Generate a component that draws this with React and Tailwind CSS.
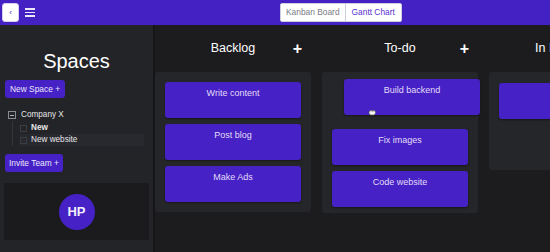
import React from 'react';

const columns = [
    { title: 'Backlog', cards: ['Write content', 'Post blog', 'Make Ads'] },
    { title: 'To-do', cards: ['Fix images', 'Code website'], dragging: true },
    { title: 'In Progress', cards: ['Create'] },
];

function Card({ text }) {
    return (
        <div className="h-[36px] rounded-[3px] bg-[#4521c6] pt-[5px] text-center text-[9px] text-[#e4dcf8] shadow-[0_1px_2px_rgba(0,0,0,0.4)] whitespace-nowrap overflow-hidden">
            {text}
        </div>
    );
}

export default function App() {
    return (
        <div className="w-[550px] h-[252px] overflow-hidden bg-[#1c1c1e] flex flex-col" style={{ fontFamily: '"Liberation Sans", Arial, sans-serif' }}>
            {/* top bar */}
            <div className="h-[25px] shrink-0 bg-[#4321c2] flex items-center px-[2px] relative">
                <button type="button" className="w-[17px] h-[19px] rounded-[3px] bg-white border border-[#d6d0ee] text-[#4321c2] text-[8px] leading-none flex items-center justify-center">
                    ‹
                </button>
                <div className="ml-[6px] flex flex-col gap-[2px]">
                    <span className="block w-[10px] h-[1.5px] bg-[#ebe7fb]" />
                    <span className="block w-[10px] h-[1.5px] bg-[#ebe7fb]" />
                    <span className="block w-[10px] h-[1.5px] bg-[#ebe7fb]" />
                </div>
                <div className="ml-[245px] flex h-[19px] rounded-[2px] bg-white border border-[#cfcde0] text-[8.4px]">
                    <div className="px-[5px] flex items-center text-[#7b7b85] border-r border-[#cfcde0]">Kanban Board</div>
                    <div className="px-[6px] flex items-center text-[#5a2fd0]">Gantt Chart</div>
                </div>
            </div>

            <div className="flex flex-1 min-h-0">
                {/* sidebar */}
                <div className="w-[153px] shrink-0 bg-[#232427] flex flex-col px-[4px]">
                    <div className="text-center text-white text-[20px] mt-[24px] leading-[24px]">Spaces</div>
                    <button type="button" className="mt-[7px] ml-[1px] self-start h-[18px] px-[5px] rounded-[3px] bg-[#4521c6] text-[8.4px] text-[#ece8fb]">
                        New Space +
                    </button>
                    <div className="mt-[11px] ml-[4px] text-[8.2px] text-[#e6e6e8]">
                        <div className="flex items-center gap-[5px] h-[12px]">
                            <span className="w-[8px] h-[8px] border border-[#8a8a90] flex items-center justify-center">
                                <span className="block w-[4px] h-px bg-[#b0b0b4]" />
                            </span>
                            Company X
                        </div>
                        <div className="ml-[4px] border-l border-[#34353a] pl-[7px] flex flex-col pt-px">
                            <div className="flex items-center gap-[4px] h-[12px] font-bold">
                                <span className="w-[7px] h-[7px] border border-[#3c3d42]" />
                                New
                            </div>
                            <div className="flex items-center gap-[4px] h-[12px] bg-[#28282f] mr-[5px]">
                                <span className="w-[7px] h-[7px] border border-[#3c3d42]" />
                                New website
                            </div>
                        </div>
                    </div>
                    <button type="button" className="mt-[8px] ml-[1px] self-start h-[18px] px-[4px] rounded-[3px] bg-[#4521c6] text-[8.4px] text-[#ece8fb]">
                        Invite Team +
                    </button>
                    <div className="mt-[11px] h-[57px] bg-[#1b1b1d] flex items-center justify-center">
                        <div className="w-[36px] h-[36px] rounded-full bg-[#4521c6] flex items-center justify-center text-[13px] font-bold text-[#f1eefc]">
                            HP
                        </div>
                    </div>
                </div>
                <div className="w-[2px] shrink-0 bg-[#161618]" />

                {/* board */}
                <div className="flex-1 flex gap-[11px] relative overflow-hidden">
                    {columns.map((col) => (
                        <div key={col.title} className="w-[156px] shrink-0 flex flex-col">
                            <div className="h-[47px] grid grid-cols-[1fr_auto_1fr] items-center text-white">
                                <div />
                                <div className="text-[12.5px] whitespace-nowrap">{col.title}</div>
                                <div className="justify-self-end pr-[9px] text-[16px] font-bold leading-none">+</div>
                            </div>
                            <div className={`rounded-[3px] bg-[#252629] px-[10px] flex flex-col gap-[6px] ${col.dragging ? 'pt-[10px] pb-[6px]' : col.title === 'In Progress' ? 'pt-[11px] h-[98px]' : 'pt-[10px] pb-[10px]'}`}>
                                {col.dragging && <div className="h-[41px]" />}
                                {col.cards.map((c) => <Card key={c} text={c} />)}
                            </div>
                        </div>
                    ))}
                    {/* card being dragged */}
                    <div className="absolute left-[189px] top-[54px] w-[136px]">
                        <Card text="Build backend" />
                    </div>
                    {/* grab cursor */}
                    <svg className="absolute left-[213px] top-[84px]" width="8" height="7" viewBox="0 0 8 7">
                        <path d="M1 3.5 Q1 1.5 2.5 1.5 L6 1.5 Q7.5 1.5 7.5 3.5 Q7.5 6 5.5 6 L3 6 Q1 6 1 3.5 Z" fill="#f4f4f4" stroke="#555" strokeWidth="0.6" />
                        <path d="M3 1.5 V3 M4.5 1.5 V3 M6 1.5 V3" stroke="#777" strokeWidth="0.5" />
                    </svg>
                </div>
            </div>
        </div>
    );
}
